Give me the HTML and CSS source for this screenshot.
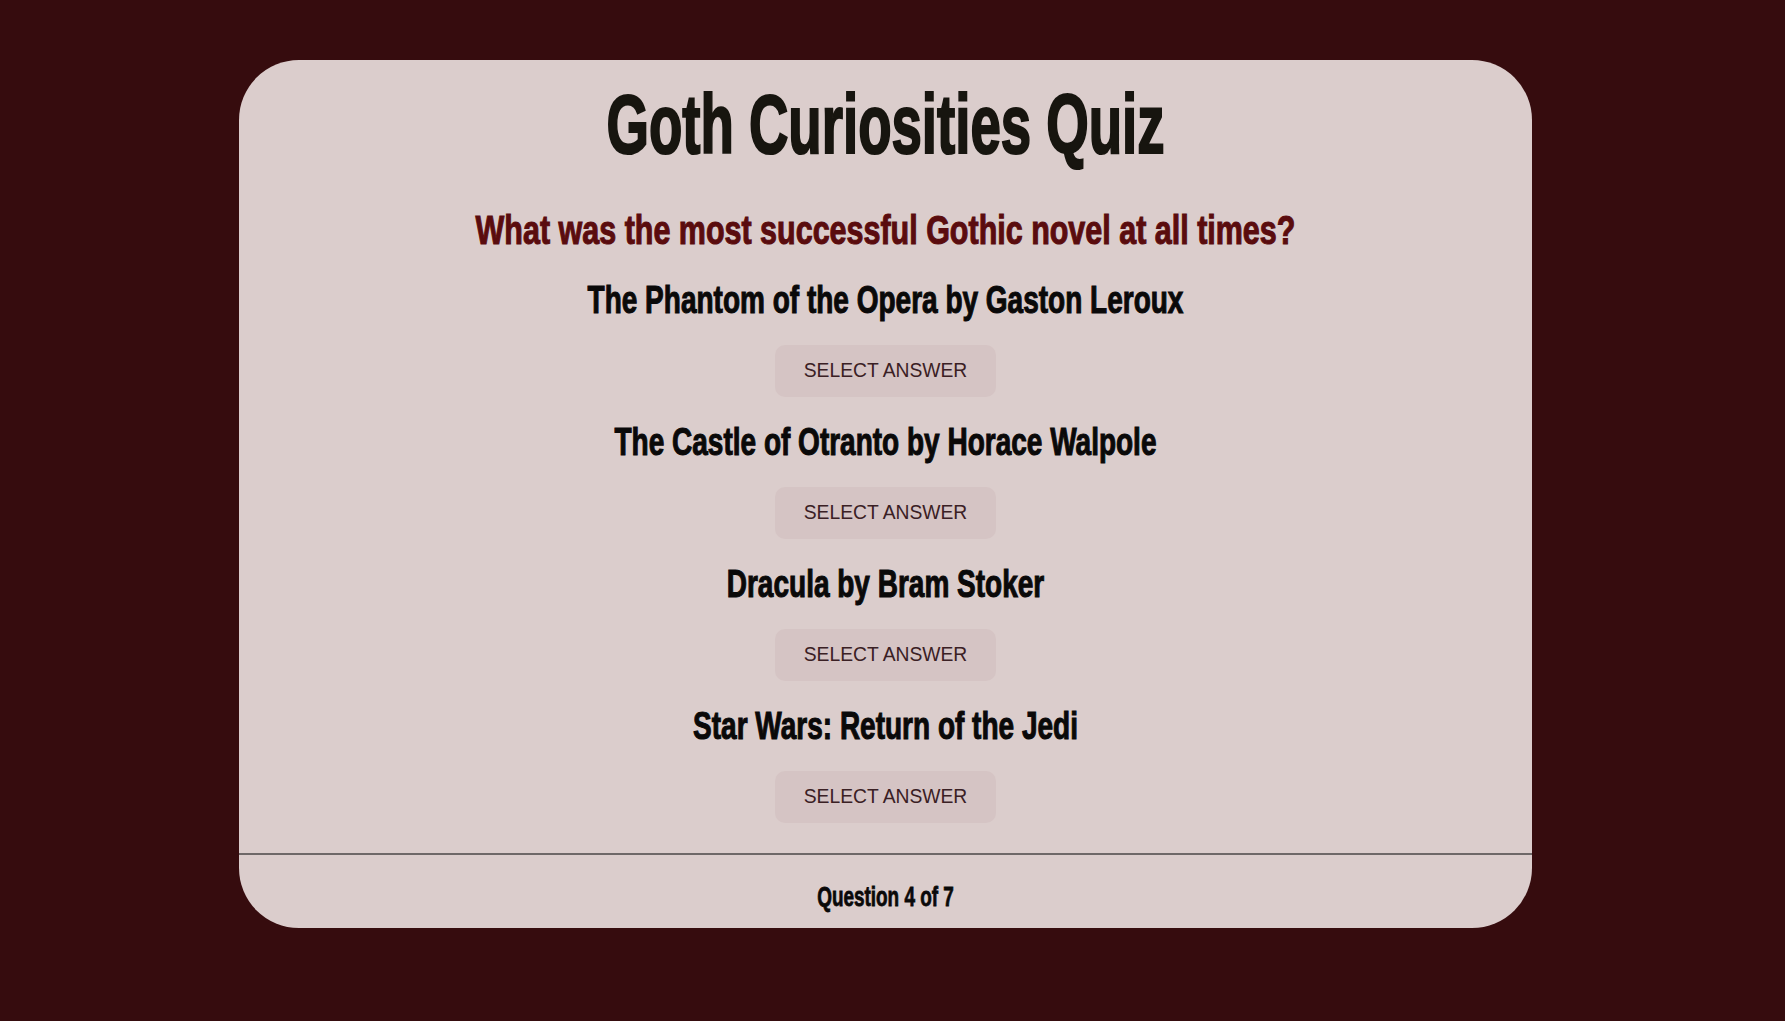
FILE: index.html
```html
<!DOCTYPE html>
<html lang="en">
<head>
<meta charset="utf-8">
<title>Goth Curiosities Quiz</title>
<link rel="stylesheet" href="styles.css">
</head>
<body>
<div class="page">
  <main class="card">
    <h1 class="title">Goth Curiosities Quiz</h1>
    <h2 class="question">What was the most successful Gothic novel at all times?</h2>
    <div class="options">
      <div class="option">
        <h3 class="answer">The Phantom of the Opera by Gaston Leroux</h3>
        <button class="select-btn">SELECT ANSWER</button>
      </div>
      <div class="option">
        <h3 class="answer">The Castle of Otranto by Horace Walpole</h3>
        <button class="select-btn">SELECT ANSWER</button>
      </div>
      <div class="option">
        <h3 class="answer">Dracula by Bram Stoker</h3>
        <button class="select-btn">SELECT ANSWER</button>
      </div>
      <div class="option">
        <h3 class="answer">Star Wars: Return of the Jedi</h3>
        <button class="select-btn">SELECT ANSWER</button>
      </div>
    </div>
    <footer class="progress">
      <p class="progress-text">Question 4 of 7</p>
    </footer>
  </main>
</div>
</body>
</html>
```

FILE: styles.css
```css
html, body {
  margin: 0;
  padding: 0;
}

body {
  background: #360c0e;
  font-family: "Liberation Sans", Arial, sans-serif;
  min-height: 1021px;
}

.page {
  padding-top: 60px;
}

.card {
  width: 1293px;
  margin-left: calc(50% - 653.5px);
  background: #dbcdcc;
  border-radius: 60px;
  padding-top: 14px;
  display: flex;
  flex-direction: column;
  align-items: stretch;
  overflow: hidden;
}

.title,
.question,
.answer,
.progress-text {
  font-family: "Liberation Sans", Arial, sans-serif;
  font-weight: 700;
  text-align: center;
  margin: 0;
}

.title {
  font-size: 84px;
  line-height: 100px;
  color: #17150f;
  transform: scaleX(0.65);
  -webkit-text-stroke: 2.2px #17150f;
}

.question {
  margin-top: 31px;
  font-size: 40px;
  line-height: 50px;
  color: #5a0c0e;
  transform: scaleX(0.762);
  -webkit-text-stroke: 1.1px #5a0c0e;
}

.options {
  margin-top: 20px;
  display: flex;
  flex-direction: column;
  align-items: center;
  gap: 20px;
}

.option {
  display: flex;
  flex-direction: column;
  align-items: center;
  gap: 20px;
  width: 100%;
}

.answer {
  font-size: 39px;
  line-height: 50px;
  color: #0a0909;
  transform: scaleX(0.718);
  -webkit-text-stroke: 1.1px #0a0909;
  width: 100%;
}

.select-btn {
  width: 221px;
  height: 52px;
  border: none;
  border-radius: 10px;
  background: #d5c4c4;
  color: #3a2024;
  font-family: "Liberation Sans", Arial, sans-serif;
  font-size: 19.3px;
  padding: 0;
  cursor: pointer;
}

.progress {
  margin-top: 30px;
  border-top: 2px solid #6e6868;
  padding: 25px 0 13px;
}

.progress-text {
  font-size: 27px;
  line-height: 35px;
  color: #0a0909;
  transform: scaleX(0.7);
  -webkit-text-stroke: 0.8px #0a0909;
}
```
